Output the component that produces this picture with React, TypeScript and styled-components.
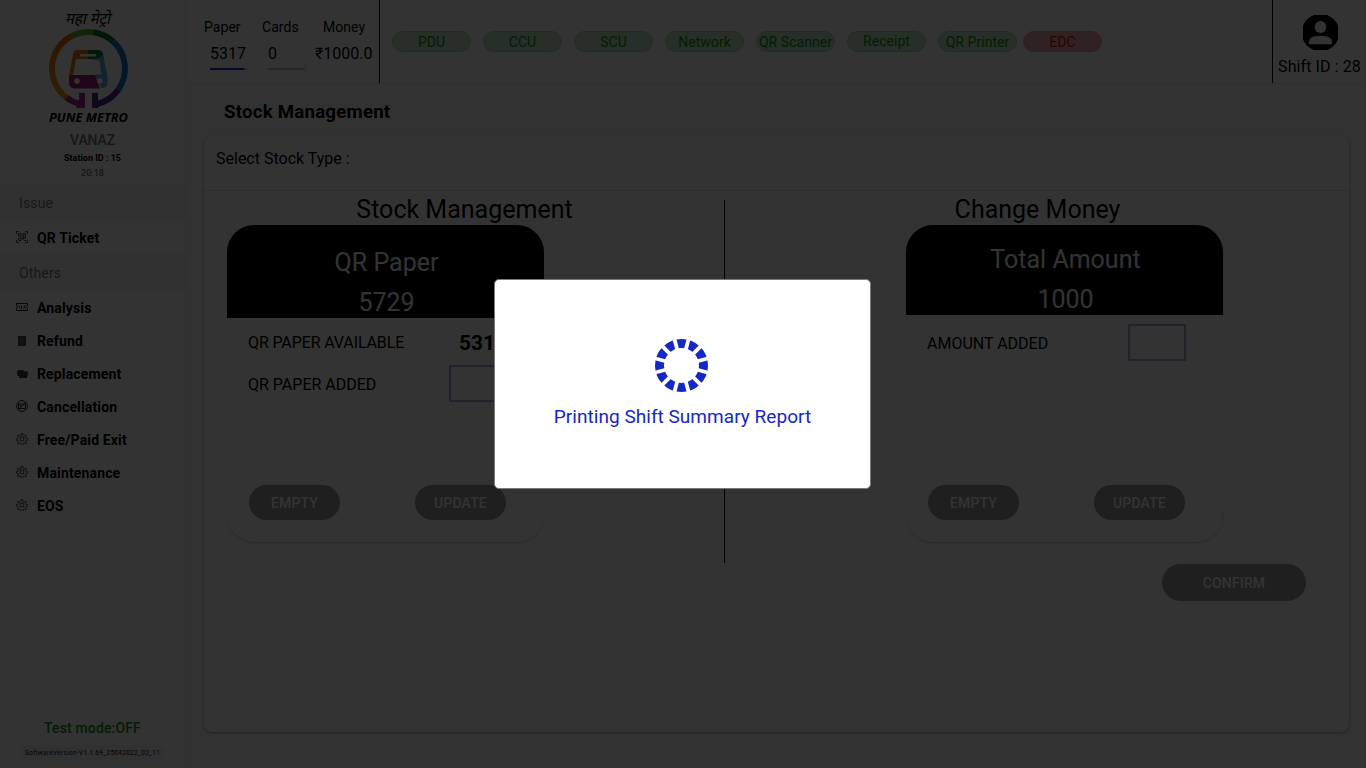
import React from "react";
import styled, { createGlobalStyle } from "styled-components";

const Global = createGlobalStyle`
  * { box-sizing: border-box; }
  body { margin: 0; background: #fbfbfb; font-family: Roboto, "Liberation Sans", sans-serif; color: #000; overflow: hidden; }
  p, h1, h2, h3 { margin: 0; font-weight: 400; }
`;

const Page = styled.div`
  display: flex;
  width: 1366px;
  height: 768px;
`;

const Sidebar = styled.aside`
  display: flex;
  flex-direction: column;
  width: 186px;
  height: 768px;
  background: #fff;
  border-right: 1px solid #f0f0f0;
`;

const Brand = styled.div`
  display: flex;
  flex-direction: column;
  align-items: center;
  height: 184px;
  padding-top: 8px;
  white-space: nowrap;
`;

const LogoSvg = styled.svg`
  display: block;
  width: 108px;
  height: 118px;
  margin-left: 3px;
`;

const StationName = styled.p`
  margin-top: 5px;
  font-size: 14px;
  font-weight: 500;
  line-height: 18px;
  letter-spacing: -0.1px;
  color: #757575;
`;

const StationMeta = styled.p<{ $strong?: boolean }>`
  font-size: 9px;
  line-height: 15px;
  margin-top: ${(p) => (p.$strong ? 2 : 0)}px;
  font-weight: ${(p) => (p.$strong ? 700 : 500)};
  color: ${(p) => (p.$strong ? "#000" : "#6c6c6c")};
`;

const NavHeading = styled.div`
  height: 37px;
  padding-left: 19px;
  background: #f5f5f5;
  color: #757575;
  font-size: 14px;
  line-height: 38px;
  letter-spacing: 0.15px;
`;

const NavItem = styled.div`
  display: flex;
  align-items: center;
  gap: 9px;
  height: 33px;
  padding-left: 16px;
  font-size: 14px;
  font-weight: 700;
  letter-spacing: 0.15px;
  svg { display: block; width: 12px; height: 12px; margin-top: -1px; }
`;

const SideFooter = styled.div`
  display: flex;
  flex-direction: column;
  align-items: center;
  margin-top: auto;
  padding-bottom: 8px;
`;

const TestMode = styled.p`
  font-size: 14px;
  font-weight: 500;
  line-height: 18px;
  letter-spacing: 0.15px;
  color: #0e900e;
`;

const Version = styled.p`
  margin-top: 8px;
  padding: 0 5px;
  height: 15px;
  border-radius: 7px;
  background: #f5f5f5;
  font-size: 6.5px;
  line-height: 16px;
  letter-spacing: 0.29px;
  white-space: nowrap;
`;

const Content = styled.div`
  display: flex;
  flex-direction: column;
  width: 1180px;
`;

const TopBar = styled.header`
  display: flex;
  height: 84px;
  background: #fff;
  border-bottom: 1px solid #ebebeb;
`;

const Stats = styled.div`
  display: flex;
  width: 194px;
  padding: 18px 0 0 18px;
  border-right: 1px solid #000;
`;

const Stat = styled.div<{ $w: number }>`
  width: ${(p) => p.$w}px;
  white-space: nowrap;
`;

const StatLabel = styled.p<{ $indent?: number }>`
  padding-left: ${(p) => p.$indent ?? 0}px;
  font-size: 14px;
  line-height: 18px;
  letter-spacing: 0.05px;
`;

const StatValue = styled.p<{ $indent?: number }>`
  margin-top: 7px;
  padding-left: ${(p) => p.$indent ?? 0}px;
  font-size: 16px;
  line-height: 22px;
`;

const Meter = styled.div<{ $fill: number }>`
  width: 37px;
  height: 2px;
  margin: 3px 0 0 6px;
  background: linear-gradient(to right, #1428c8 ${(p) => p.$fill}%, #b9bee6 ${(p) => p.$fill}%);
`;

const Devices = styled.div`
  display: flex;
  align-items: flex-start;
  gap: 12px;
  width: 892px;
  padding: 31px 0 0 12px;
`;

const Device = styled.span<{ $down?: boolean; $lift?: boolean }>`
  width: 79px;
  height: 21px;
  margin-left: ${(p) => (p.$down ? -6 : 0)}px;
  border: 1px solid ${(p) => (p.$down ? "#f0a0a0" : "#aadcaa")};
  border-radius: 11px;
  background: ${(p) => (p.$down ? "#f0aaaa" : "#c8e6c8")};
  color: ${(p) => (p.$down ? "#d20a0a" : "#0a960a")};
  font-size: 14px;
  line-height: ${(p) => (p.$lift ? 19 : 21)}px;
  letter-spacing: 0.05px;
  text-align: center;
  white-space: nowrap;
`;

const ShiftBox = styled.div`
  display: flex;
  flex-direction: column;
  align-items: center;
  width: 94px;
  padding-top: 15px;
  border-left: 1px solid #000;
  font-size: 16px;
  letter-spacing: 0.1px;
  line-height: 22px;
  white-space: nowrap;
  svg { display: block; width: 35px; height: 35px; margin: 0 0 6px 1px; }
`;

const Title = styled.h1`
  height: 52px;
  padding-left: 38px;
  font-size: 18.7px;
  font-weight: 700;
  line-height: 57px;
  letter-spacing: 0.2px;
`;

const Panel = styled.main`
  display: flex;
  flex-direction: column;
  width: 1145px;
  height: 596px;
  margin-left: 18px;
  border-radius: 8px;
  background: #fff;
  box-shadow: 0 1px 3px rgba(0, 0, 0, 0.4);
`;

const PanelHead = styled.div`
  height: 55px;
  padding-left: 12px;
  border-bottom: 1px solid #dedede;
  font-size: 16px;
  line-height: 46px;
`;

const Columns = styled.div`
  display: flex;
  height: 372px;
  padding-top: 9px;
`;

const Column = styled.section<{ $w: number; $divided?: boolean; $pad: number }>`
  width: ${(p) => p.$w}px;
  padding-left: ${(p) => p.$pad}px;
  border-right: ${(p) => (p.$divided ? "1px solid #000" : "0")};
`;

const ColumnTitle = styled.h2<{ $pad: number }>`
  margin-left: ${(p) => -p.$pad}px;
  height: 25px;
  padding-left: 1px;
  font-size: 25px;
  line-height: 20px;
  text-align: center;
`;

const Card = styled.div`
  display: flex;
  flex-direction: column;
  width: 317px;
  height: 317px;
  border-radius: 27px;
  overflow: hidden;
  box-shadow: 0 1px 2px rgba(0, 0, 0, 0.2);
`;

const CardHead = styled.div<{ $h: number }>`
  height: ${(p) => p.$h}px;
  padding: ${(p) => p.$h - 75}px 0 0 2px;
  background: #000;
  color: #fff;
  font-size: 25px;
  line-height: 40px;
  text-align: center;
`;

const CardRow = styled.div<{ $h: number; $tight?: boolean }>`
  display: flex;
  align-items: center;
  justify-content: space-between;
  height: ${(p) => p.$h}px;
  padding: 0 37px 0 21px;
  font-size: 16px;
  letter-spacing: ${(p) => (p.$tight ? "-0.12px" : "0")};
`;

const RowLabel = styled.span`
  padding-top: 1px;
`;

const Available = styled.b`
  font-size: 21px;
  width: 48px;
  font-weight: 700;
  letter-spacing: 0;
  padding-top: 1px;
`;

const Field = styled.div`
  width: 58px;
  height: 37px;
  border: 2px solid #a0a8dc;
`;

const Actions = styled.div`
  display: flex;
  justify-content: space-between;
  margin-top: auto;
  padding: 0 38px 22px 22px;
`;

const Button = styled.button<{ $w?: number; $h?: number }>`
  width: ${(p) => p.$w ?? 91}px;
  height: ${(p) => p.$h ?? 35}px;
  padding: 1px 0 0;
  border: 0;
  border-radius: 19px;
  background: #999;
  color: #fff;
  font-family: inherit;
  font-size: 14px;
  font-weight: 500;
  letter-spacing: 0.15px;
`;

const PanelFoot = styled.div`
  display: flex;
  justify-content: flex-end;
  padding: 1px 43px 0 0;
`;

const Backdrop = styled.div`
  position: absolute;
  top: 0;
  left: 0;
  display: flex;
  align-items: center;
  justify-content: center;
  width: 1366px;
  height: 768px;
  background: rgba(0, 0, 0, 0.8);
`;

const Dialog = styled.div`
  display: flex;
  flex-direction: column;
  align-items: center;
  width: 377px;
  height: 210px;
  margin-right: 1px;
  padding-top: 58px;
  border: 1px solid #7a7a7a;
  border-radius: 5px;
  background: #fff;
  color: #1428c8;
  font-size: 19px;
  line-height: 26px;
  letter-spacing: 0.04px;
  svg { display: block; width: 55px; height: 55px; margin: 0 2px 11px 0; }
`;

const polar = (deg: number, r = 36.5) => {
  const a = (deg * Math.PI) / 180;
  return `${(48.5 + r * Math.sin(a)).toFixed(2)} ${(60.5 - r * Math.cos(a)).toFixed(2)}`;
};

const ringParts: [number, number, string][] = [
  [217, 333, "#e6780f"],
  [333, 367, "#64b41e"],
  [7, 43, "#0a7d32"],
  [43, 125, "#0a78c8"],
  [125, 167, "#5a1e96"],
  [193, 217, "#aa1e8c"],
];

const Logo = () => (
  <LogoSvg viewBox="0 0 108 118">
    <defs>
      <linearGradient id="arc" x1="0" y1="0" x2="0" y2="1">
        <stop offset="0" stopColor="#eb6414" />
        <stop offset="1" stopColor="#f0a00f" />
      </linearGradient>
    </defs>
    <text x="51" y="16" textAnchor="middle" fontFamily="'Noto Sans', sans-serif" fontSize="16" fontWeight="400" textLength="45" lengthAdjust="spacingAndGlyphs" transform="skewX(-12)">महा मेट्रो</text>
    {ringParts.map(([a, b, c]) => (
      <path key={a} d={`M${polar(a)} A36.5 36.5 0 0 1 ${polar(b)}`} fill="none" stroke={a === 217 ? "url(#arc)" : c} strokeWidth="6" />
    ))}
    <path d="M39 85h6v15h-8l-2-5 4-1z" fill="#aa1e8c" />
    <path d="M52 85h6v9l4 1-4 5h-6z" fill="#5a1e96" />
    <path d="M36 42h13v9H36l-3 17h-4l4-22q1-4 3-4z" fill="#e6780f" />
    <path d="M48 42h10q4 0 5 4l1 5H48z" fill="#0a7d32" />
    <path d="M53 51l8-2 2-2 4.500 21v6q0 6-6 6l-7-14h6l-2-14h-6z" fill="#64aae6" />
    <path d="M29 67h26l5 13.500H35q-6 0-6-6z" fill="#a01e78" />
    <path d="M40 46h16v2.500H40z" fill="#fff" />
    <path d="M37.500 53h21q1 0 1.200 1l1.800 12.500H34.500L36.300 54q.2-1 1.200-1z" fill="#fff" />
    <circle cx="37" cy="73" r="2.800" fill="#fff" />
    <circle cx="60" cy="73" r="2.800" fill="#fff" />
    <text x="48.500" y="114" textAnchor="middle" fontFamily="'Open Sans', Lato, sans-serif" fontSize="12.500" fontStyle="italic" fontWeight="700" textLength="79" lengthAdjust="spacingAndGlyphs">PUNE METRO</text>
  </LogoSvg>
);

const QrIcon = () => (
  <svg viewBox="0 0 12 12" fill="none" stroke="#222" strokeWidth="0.8">
    <path d="M.5 3V.5H3M9 .5h2.500V3M.5 9v2.500H3M9 11.500h2.500V9" />
    <path d="M2.500 2.500h2.500v2.500H2.500zM7 2.500h2.500v2.500H7zM2.500 7h2.500v2.500H2.500zM6 6h2v2H6zM8 9.500h2M9.500 6v2" />
  </svg>
);
const TicketIcon = () => (
  <svg viewBox="0 0 12 12" fill="none" stroke="#222" strokeWidth="1">
    <path d="M.5 2.500h11v2l-1 1.500 1 1.500v2H.5v-2l1-1.500-1-1.500z" />
    <path strokeWidth="0.8" d="M3 4.500l1 3M5.500 4.500v3h1M8 4.500v3M9.500 4.500L8.300 6l1.200 1.500" />
  </svg>
);
const RefundIcon = () => (
  <svg viewBox="0 0 12 12">
    <path d="M2 2h8v10H2z" fill="#4a4a60" />
    <path d="M7.500 5a2.200 2.200 0 1 0 .5 3M6 5.500l1.500 1.500" fill="none" stroke="#999" strokeWidth="0.7" />
  </svg>
);
const FolderIcon = () => (
  <svg viewBox="0 0 12 12" fill="#3c3c4a">
    <path d="M.8 5L2.500 3h4.500l1 1.200h3.800v2.500l-.7 4.300H3.500L3 9H1.500z" />
  </svg>
);
const CancelIcon = () => (
  <svg viewBox="0 0 12 12" fill="none" stroke="#111" strokeWidth="0.9">
    <circle cx="6" cy="6" r="5.400" />
    <path d="M2.500 4h7v4.500h-7zM10 2.200L2.200 9.800M2.500 4l3.500 3" />
  </svg>
);
const GearIcon = () => (
  <svg viewBox="0 0 24 24" fill="none" stroke="#222" strokeWidth="1.600">
    <path d="M10.500 1h3l.7 4 2.300 1 3-2 1.500 1.500-2 3 1 2.300 3.500.7v3l-3.500.5-1 2.300 2 3.200-1.500 1.500-3-2-2.300 1-.7 3.500h-3l-.7-3.500-2.300-1-3 2L3 20.500l2-3.200L4 15l-3.500-.5v-3L4 10.800l1-2.300-2-3L4.500 4l3 2 2.300-1z" />
    <path d="M8.500 8.500h7v7h-7z" />
  </svg>
);

const others: [string, () => React.JSX.Element][] = [
  ["Analysis", TicketIcon],
  ["Refund", RefundIcon],
  ["Replacement", FolderIcon],
  ["Cancellation", CancelIcon],
  ["Free/Paid Exit", GearIcon],
  ["Maintenance", GearIcon],
  ["EOS", GearIcon],
];

const devices = ["PDU", "CCU", "SCU", "Network", "QR Scanner", "Receipt", "QR Printer", "EDC"];

export default function App() {
  return (
    <>
      <Global />
      <Page>
        <Sidebar>
          <Brand>
            <Logo />
            <StationName>VANAZ</StationName>
            <StationMeta $strong>Station ID : 15</StationMeta>
            <StationMeta>20:18</StationMeta>
          </Brand>
          <NavHeading>Issue</NavHeading>
          <NavItem><QrIcon />QR Ticket</NavItem>
          <NavHeading>Others</NavHeading>
          {others.map(([label, Icon]) => (
            <NavItem key={label}><Icon />{label}</NavItem>
          ))}
          <SideFooter>
            <TestMode>Test mode:OFF</TestMode>
            <Version>SoftwareVersion-V1.1.69_25042022_02_11</Version>
          </SideFooter>
        </Sidebar>
        <Content>
          <TopBar>
            <Stats>
              <Stat $w={58}>
                <StatLabel>Paper</StatLabel>
                <StatValue $indent={6}>5317</StatValue>
                <Meter $fill={93} />
              </Stat>
              <Stat $w={53}>
                <StatLabel>Cards</StatLabel>
                <StatValue $indent={6}>0</StatValue>
                <Meter $fill={0} />
              </Stat>
              <Stat $w={60}>
                <StatLabel $indent={8}>Money</StatLabel>
                <StatValue>₹1000.0</StatValue>
              </Stat>
            </Stats>
            <Devices>
              {devices.map((d) => (
                <Device key={d} $down={d === "EDC"} $lift={d === "Receipt"}>{d}</Device>
              ))}
            </Devices>
            <ShiftBox>
              <svg viewBox="0 0 35 35">
                <circle cx="17.500" cy="17.500" r="18.800" />
                <circle cx="17.500" cy="12" r="5.900" fill="#fff" />
                <path d="M6 29.300v-2.500q0-6 11.500-6t11.500 6v2.500z" fill="#fff" />
              </svg>
              Shift ID : 28
            </ShiftBox>
          </TopBar>
          <Title>Stock Management</Title>
          <Panel>
            <PanelHead>Select Stock Type :</PanelHead>
            <Columns>
              <Column $w={521} $pad={23} $divided>
                <ColumnTitle $pad={23}>Stock Management</ColumnTitle>
                <Card>
                  <CardHead $h={93}>QR Paper<br />5729</CardHead>
                  <CardRow $h={48} $tight><RowLabel>QR PAPER AVAILABLE</RowLabel><Available>5317</Available></CardRow>
                  <CardRow $h={35}><RowLabel>QR PAPER ADDED</RowLabel><Field /></CardRow>
                  <Actions><Button>EMPTY</Button><Button>UPDATE</Button></Actions>
                </Card>
              </Column>
              <Column $w={624} $pad={181}>
                <ColumnTitle $pad={181}>Change Money</ColumnTitle>
                <Card>
                  <CardHead $h={90}>Total Amount<br />1000</CardHead>
                  <CardRow $h={55}><RowLabel>AMOUNT ADDED</RowLabel><Field /></CardRow>
                  <Actions><Button>EMPTY</Button><Button>UPDATE</Button></Actions>
                </Card>
              </Column>
            </Columns>
            <PanelFoot><Button $w={144} $h={37}>CONFIRM</Button></PanelFoot>
          </Panel>
        </Content>
      </Page>
      <Backdrop>
        <Dialog>
          <svg viewBox="-27.500 -27.500 55 55">
            <circle r="22" fill="none" stroke="#1428c8" strokeWidth="9" />
            {[15, 45, 75, 105, 135, 165].map((a) => (
              <path key={a} d="M0-28V28" stroke="#fff" strokeWidth="3.800" transform={`rotate(${a})`} />
            ))}
          </svg>
          Printing Shift Summary Report
        </Dialog>
      </Backdrop>
    </>
  );
}
